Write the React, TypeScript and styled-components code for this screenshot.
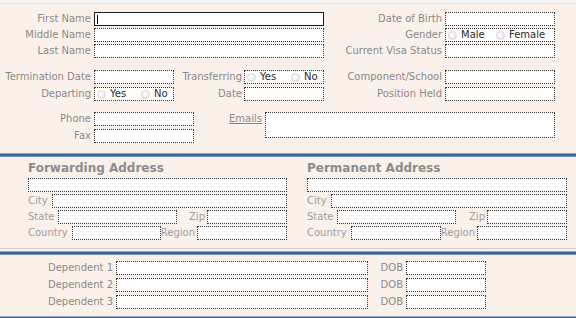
import React from "react";
import styled, { createGlobalStyle } from "styled-components";

const GlobalStyle = createGlobalStyle`
  html, body { margin: 0; padding: 0; background: #fbf1eb; }
  body { font-family: "DejaVu Sans", Verdana, sans-serif; }
`;

const Page = styled.div`
  width: 576px;
  height: 318px;
  overflow: hidden;
  background: #fbf1eb;
  border-top: 3px solid #f7f5f4;
  box-shadow: inset 0 1px 0 #e6dfdb;
`;

const TopSection = styled.section`
  display: flex;
  flex-direction: column;
  padding: 9px 0 10px 0;
`;

const Block = styled.div<{ $gap: number; $mt?: number }>`
  display: flex;
  flex-direction: column;
  gap: ${(p) => p.$gap}px;
  margin-top: ${(p) => p.$mt ?? 0}px;
`;

const Row = styled.div`
  display: flex;
  align-items: center;
  height: 14px;
`;

const Label = styled.label<{ $w?: number; $mr?: number; $tone?: string }>`
  flex: none;
  ${(p) => (p.$w !== undefined ? `width: ${p.$w}px;` : "")}
  margin-right: ${(p) => p.$mr ?? 3}px;
  text-align: right;
  font-size: 10px;
  line-height: 14px;
  color: ${(p) => p.$tone ?? "#8b8887"};
  white-space: nowrap;
`;

const TextField = styled.input<{ $w?: number; $focused?: boolean }>`
  box-sizing: border-box;
  flex: ${(p) => (p.$w !== undefined ? "none" : "1 1 auto")};
  ${(p) => (p.$w !== undefined ? `width: ${p.$w}px;` : "min-width: 0;")}
  height: 14px;
  margin: 0;
  padding: 0;
  font: inherit;
  outline: none;
  border: ${(p) => (p.$focused ? "1px solid #1c1c1c" : "1px dotted #333")};
  background: ${(p) =>
    p.$focused
      ? "linear-gradient(#000, #000) no-repeat 2px 2px / 1px 9px, #fff"
      : "#fff"};
`;

const RadioBox = styled.div<{ $w: number }>`
  box-sizing: border-box;
  flex: none;
  width: ${(p) => p.$w}px;
  height: 14px;
  border: 1px dotted #333;
  background: #fff;
  display: flex;
  align-items: center;
  padding-left: 2px;
`;

const RadioOption = styled.label<{ $w: number }>`
  display: flex;
  align-items: center;
  gap: 4px;
  width: ${(p) => p.$w}px;
  flex: none;
  font-size: 10px;
  line-height: 12px;
  color: #2a2a2a;
  white-space: nowrap;
`;

const RadioDot = styled.span`
  box-sizing: border-box;
  width: 9px;
  height: 9px;
  border-radius: 50%;
  border: 1px solid #d6d6d6;
  background: radial-gradient(circle at 40% 40%, #ffffff 0%, #f2f2f2 50%, #dedede 100%);
  flex: none;
`;

const ContactGrid = styled.div`
  display: grid;
  grid-template-columns: 91px 100px 65px 290px;
  grid-template-rows: 14px 14px;
  column-gap: 3px;
  row-gap: 3px;
  align-items: center;
  margin-top: 11px;
`;

const EmailsLink = styled.a`
  grid-column: 3;
  grid-row: 1;
  justify-self: end;
  font-size: 10px;
  line-height: 14px;
  color: #8b8887;
  text-decoration: underline;
  cursor: pointer;
`;

const EmailsArea = styled.textarea`
  grid-column: 4;
  grid-row: 1 / span 2;
  align-self: start;
  box-sizing: border-box;
  width: 290px;
  height: 26px;
  margin: 0;
  padding: 0;
  resize: none;
  outline: none;
  border: 1px dotted #333;
  background: #fff;
  font: inherit;
`;

const Bar = styled.div`
  height: 4px;
  background: linear-gradient(#8ea5c4 0 1px, #3d6595 1px 3px, #7390b5 3px 4px);
`;

const AddressSection = styled.section`
  display: grid;
  grid-template-columns: 259px 260px;
  column-gap: 20px;
  padding: 4px 0 8px 28px;
  border-bottom: 1px solid #c9ccd6;
  margin-bottom: 2px;
`;

const AddressCol = styled.div`
  display: flex;
  flex-direction: column;
  gap: 2px;
`;

const Heading = styled.h2`
  margin: 0;
  height: 15px;
  font-size: 12px;
  line-height: 15px;
  font-weight: bold;
  color: #8e8c8b;
  white-space: nowrap;
`;

const Spacer = styled.div`
  flex: 1 1 auto;
`;

const DependentsGrid = styled.section`
  display: grid;
  grid-template-columns: 113px 252px 32px 80px;
  grid-auto-rows: 14px;
  column-gap: 3px;
  row-gap: 3px;
  align-items: center;
  padding: 6px 0 7px 0;
`;

const addrTone = "#a09d9c";

function AddressBlock({ title }: { title: string }) {
  return (
    <AddressCol>
      <Heading>{title}</Heading>
      <Row>
        <TextField />
      </Row>
      <Row>
        <Label $mr={4} $tone={addrTone}>City</Label>
        <TextField />
      </Row>
      <Row>
        <Label $mr={4} $tone={addrTone}>State</Label>
        <TextField $w={119} />
        <Spacer />
        <Label $mr={2} $tone={addrTone}>Zip</Label>
        <TextField $w={80} />
      </Row>
      <Row>
        <Label $mr={4} $tone={addrTone}>Country</Label>
        <TextField />
        <Label $mr={2} $tone={addrTone}>Region</Label>
        <TextField $w={90} />
      </Row>
    </AddressCol>
  );
}

function YesNo({ w }: { w: number }) {
  return (
    <RadioBox $w={w}>
      <RadioOption $w={44}>
        <RadioDot />
        Yes
      </RadioOption>
      <RadioOption $w={30}>
        <RadioDot />
        No
      </RadioOption>
    </RadioBox>
  );
}

export default function App() {
  return (
    <Page>
      <GlobalStyle />
      <TopSection>
        <Block $gap={2}>
          <Row>
            <Label $w={91}>First Name</Label>
            <TextField $w={230} $focused />
            <Label $w={118}>Date of Birth</Label>
            <TextField $w={110} />
          </Row>
          <Row>
            <Label $w={91}>Middle Name</Label>
            <TextField $w={230} />
            <Label $w={118}>Gender</Label>
            <RadioBox $w={110}>
              <RadioOption $w={48}>
                <RadioDot />
                Male
              </RadioOption>
              <RadioOption $w={56}>
                <RadioDot />
                Female
              </RadioOption>
            </RadioBox>
          </Row>
          <Row>
            <Label $w={91}>Last Name</Label>
            <TextField $w={230} />
            <Label $w={118}>Current Visa Status</Label>
            <TextField $w={110} />
          </Row>
        </Block>
        <Block $gap={3} $mt={12}>
          <Row>
            <Label $w={91}>Termination Date</Label>
            <TextField $w={80} />
            <Label $w={68} $mr={2}>Transferring</Label>
            <YesNo w={80} />
            <Label $w={118}>Component/School</Label>
            <TextField $w={110} />
          </Row>
          <Row>
            <Label $w={91}>Departing</Label>
            <YesNo w={80} />
            <Label $w={68} $mr={2}>Date</Label>
            <TextField $w={80} />
            <Label $w={118}>Position Held</Label>
            <TextField $w={110} />
          </Row>
        </Block>
        <ContactGrid>
          <Label $mr={0}>Phone</Label>
          <TextField $w={100} />
          <EmailsLink>Emails</EmailsLink>
          <EmailsArea />
          <Label $mr={0}>Fax</Label>
          <TextField $w={100} />
        </ContactGrid>
      </TopSection>
      <Bar />
      <AddressSection>
        <AddressBlock title="Forwarding Address" />
        <AddressBlock title="Permanent Address" />
      </AddressSection>
      <Bar />
      <DependentsGrid>
        {[1, 2, 3].map((n) => (
          <React.Fragment key={n}>
            <Label $mr={0}>Dependent {n}</Label>
            <TextField $w={252} />
            <Label $mr={0}>DOB</Label>
            <TextField $w={80} />
          </React.Fragment>
        ))}
      </DependentsGrid>
      <Bar />
    </Page>
  );
}
